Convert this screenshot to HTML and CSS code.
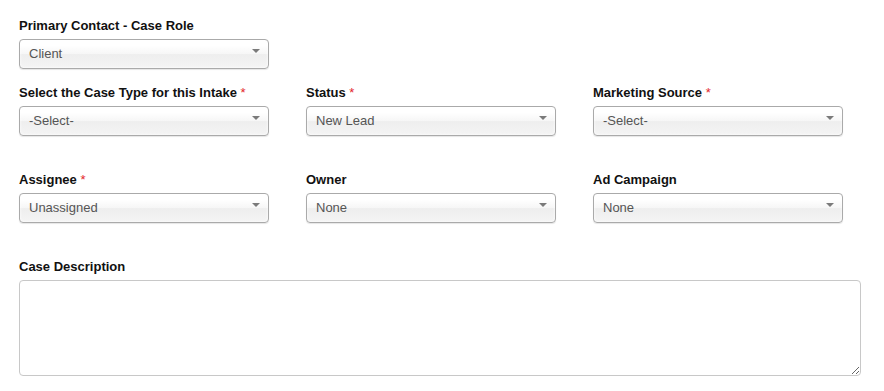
FILE: index.html
```html
<html>

<head>
  <meta charset="utf-8">
  <link rel="stylesheet" href="styles.css">
</head>

<body>
  <form class="intake">
    <div class="row row-single">
      <div class="field">
        <label for="case_role">Primary Contact - Case Role</label>
        <span class="select"><select id="case_role"><option>Client</option></select></span>
      </div>
    </div>
    <div class="row">
      <div class="field">
        <label for="case_type">Select the Case Type for this Intake <span class="req">*</span></label>
        <span class="select"><select id="case_type"><option>-Select-</option></select></span>
      </div>
      <div class="field">
        <label for="status">Status <span class="req">*</span></label>
        <span class="select"><select id="status"><option>New Lead</option></select></span>
      </div>
      <div class="field">
        <label for="marketing_source">Marketing Source <span class="req">*</span></label>
        <span class="select"><select id="marketing_source"><option>-Select-</option></select></span>
      </div>
    </div>
    <div class="row">
      <div class="field">
        <label for="assignee">Assignee <span class="req">*</span></label>
        <span class="select"><select id="assignee"><option>Unassigned</option></select></span>
      </div>
      <div class="field">
        <label for="owner">Owner</label>
        <span class="select"><select id="owner"><option>None</option></select></span>
      </div>
      <div class="field">
        <label for="ad_campaign">Ad Campaign</label>
        <span class="select"><select id="ad_campaign"><option>None</option></select></span>
      </div>
    </div>
    <div class="field field-wide">
      <label for="description">Case Description</label>
      <textarea id="description"></textarea>
    </div>
  </form>
</body>

</html>
```

FILE: styles.css
```css
body {
  margin: 0;
  padding: 18px 0 0 19px;
  background: #fff;
  color: #111;
  font-family: "Liberation Sans", Arial, sans-serif;
  font-size: 13px;
}

.row {
  display: grid;
  grid-template-columns: repeat(3, 250px);
  column-gap: 37px;
  margin-bottom: 36px;
}

.row-single {
  margin-bottom: 16px;
}

.field label {
  display: block;
  line-height: 16px;
  margin-bottom: 5px;
  font-weight: bold;
}

.req {
  color: #e3262b;
  font-weight: normal;
}

.select {
  position: relative;
  display: block;
  width: 250px;
}

.select:after {
  position: absolute;
  top: 10px;
  right: 9px;
  content: '';
  border-left: 4px solid transparent;
  border-right: 4px solid transparent;
  border-top: 4px solid #7a7a7a;
  pointer-events: none;
}

.select select {
  -webkit-appearance: none;
  appearance: none;
  display: block;
  width: 250px;
  height: 30px;
  margin: 0;
  padding: 0 24px 2px 9px;
  border: 1px solid #aaa;
  border-radius: 4px;
  background: linear-gradient(#fff 20%, #f6f6f6 50%, #eee 52%, #f4f4f4 100%);
  box-shadow: 0 0 3px #fff inset, 0 1px 1px rgba(0, 0, 0, 0.1);
  color: #555;
  font-family: "Liberation Sans", Arial, sans-serif;
  font-size: 13px;
  outline: none;
}

.field-wide textarea {
  display: block;
  box-sizing: border-box;
  width: 842px;
  height: 96px;
  margin: 0;
  border: 1px solid #c8c8c8;
  border-radius: 4px;
  font-family: "Liberation Sans", Arial, sans-serif;
  font-size: 13px;
}
```
